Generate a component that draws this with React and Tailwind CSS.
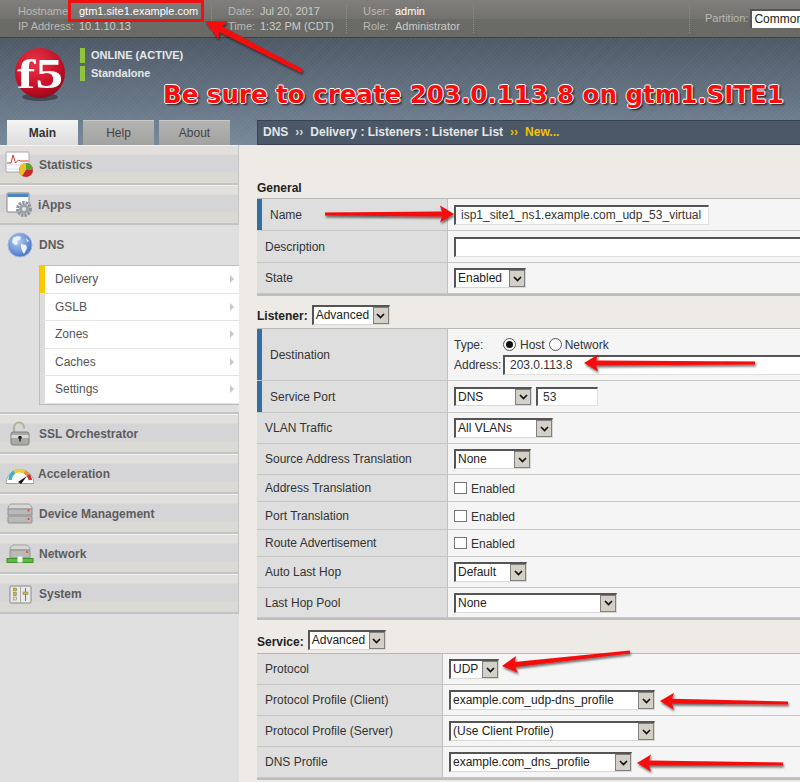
import React from "react";

const arrowPts = (x1, y1, x2, y2, w = 5, hw = 9, hl = 14, back = 2) => {
  const d = Math.hypot(x2 - x1, y2 - y1);
  const ux = (x2 - x1) / d, uy = (y2 - y1) / d;
  const nx = -uy, ny = ux;
  const p = (a, b) => `${(x1 + ux * a + nx * b).toFixed(1)},${(y1 + uy * a + ny * b).toFixed(1)}`;
  return [p(0, -w / 2 + 1), p(d - hl + back, -w / 2), p(d - hl, -hw), p(d, 0), p(d - hl, hw), p(d - hl + back, w / 2), p(0, w / 2 - 1)].join(" ");
};

const ARROWS = [
  [302, 71, 205, 21, 6, 10, 20],
  [325, 214, 454, 214, 5, 8.5, 14],
  [755, 363, 584, 363, 5, 8.5, 14],
  [630, 652, 502, 666, 5, 8.5, 15],
  [788, 703, 660, 701, 5, 8.5, 14],
  [783, 764, 637, 763, 5, 8.5, 14],
];

function Arrows() {
  return (
    <svg className="absolute left-0 top-0 pointer-events-none" width="800" height="782">
      <defs>
        <filter id="arrowShadow" x="-20%" y="-100%" width="140%" height="300%">
          <feDropShadow dx="1" dy="2" stdDeviation="1.2" floodColor="#000" floodOpacity="0.55" />
        </filter>
      </defs>
      {ARROWS.map((a, i) => (
        <polygon key={i} points={arrowPts(a[0], a[1], a[2], a[3], a[4], a[5], a[6])} fill="#f50a0a" filter="url(#arrowShadow)" />
      ))}
    </svg>
  );
}

function Chevron() {
  return (
    <svg width="9" height="6" viewBox="0 0 9 6">
      <path d="M1 1l3.5 3.5L8 1" fill="none" stroke="#111" strokeWidth="1.7" />
    </svg>
  );
}

function Select({ text, className }) {
  return (
    <div className={`flex shrink-0 border-t-2 border-l-2 border-t-[#555] border-l-[#555] border-r border-b border-r-[#d8d8d4] border-b-[#d8d8d4] bg-white ${className}`}>
      <span className="flex-1 overflow-hidden whitespace-nowrap pl-[2px] text-[12px] leading-[16px] text-[#222]">{text}</span>
      <span className="flex w-[16px] items-center justify-center border border-[#7f7f7f] bg-[#d4d0c8]">
        <Chevron />
      </span>
    </div>
  );
}

function TextInput({ value, className }) {
  return (
    <div className={`shrink-0 overflow-hidden whitespace-nowrap border-t-2 border-l-2 border-t-[#555] border-l-[#555] border-r border-b border-r-[#e0e0dc] border-b-[#e0e0dc] bg-white pl-[5px] text-[12px] leading-[16px] text-[#333] ${className}`}>
      {value}
    </div>
  );
}

function Row({ label, h, required, split = "w-[191px]", children }) {
  return (
    <div className={`flex border-b border-b-[#c6c6c4] ${h}`}>
      <div className={`flex shrink-0 items-center border-r border-r-[#c0c0c0] bg-[#dedede] text-[12px] text-[#333] ${split}`}>
        {required ? <span className="h-full w-[5px] shrink-0 bg-[#336ea5]" /> : null}
        <span className="pl-[8px]">{label}</span>
      </div>
      <div className="flex min-w-0 flex-1 items-center gap-[4px] bg-[#f5f5f5] pl-[6px]">{children}</div>
    </div>
  );
}

function Check() {
  return (
    <div className="flex items-center text-[12px] text-[#333]">
      <span className="h-[12px] w-[13px] border border-[#777] bg-white" />
      <span className="ml-[4px] mt-[2px]">Enabled</span>
    </div>
  );
}

function Radio({ on }) {
  return (
    <span className="flex h-[13px] w-[13px] items-center justify-center rounded-full border border-[#555] bg-white">
      {on ? <span className="h-[7px] w-[7px] rounded-full bg-[#111]" /> : null}
    </span>
  );
}

const StatIcon = () => (
  <svg width="30" height="28" viewBox="0 0 30 28">
    <rect x="1" y="1" width="23" height="20" rx="1" fill="#fff" stroke="#aaa" />
    <path d="M1.5 14h22M1.5 18h22" stroke="#cfe0f0" />
    <path d="M2 12h4l2-8 2.5 8 3-3 2 1 8 0" fill="none" stroke="#d33" strokeWidth="1" />
    <circle cx="21" cy="19" r="7" fill="#c9262c" />
    <path d="M21 19V12a7 7 0 0 1 7 7z" fill="#58a62d" />
    <path d="M21 19V12a7 7 0 0 0-7 7 7 7 0 0 0 3 6z" fill="#edc02a" />
  </svg>
);
const AppsIcon = () => (
  <svg width="28" height="26" viewBox="0 0 28 26">
    <rect x="1" y="1" width="22" height="19" rx="1" fill="#fff" stroke="#888" />
    <rect x="1.500" y="1.500" width="21" height="3.500" fill="#4a86c5" />
    <circle cx="18" cy="17" r="6.500" fill="none" stroke="#8d959b" strokeWidth="3" strokeDasharray="2.500 1" />
    <circle cx="18" cy="17" r="5" fill="#9aa2a8" />
    <circle cx="18" cy="17" r="2" fill="#e6e6e6" />
  </svg>
);
const GlobeIcon = () => (
  <svg width="26" height="26" viewBox="0 0 26 26">
    <defs>
      <radialGradient id="globeFill" cx="40%" cy="35%" r="70%">
        <stop offset="0%" stopColor="#b7cff0" />
        <stop offset="100%" stopColor="#3f70c8" />
      </radialGradient>
    </defs>
    <circle cx="13" cy="13" r="12" fill="url(#globeFill)" stroke="#9cb6dc" />
    <path d="M6 6c3-2 6-2 8-1l-1 3-3 1 1 3-3 1-3-3zM14 12l5 1 1 3-3 6-2-3-1-4zM19 6l3 3-2 1z" fill="#eef3fb" />
  </svg>
);
const LockIcon = () => (
  <svg width="22" height="26" viewBox="0 0 22 26">
    <path d="M5 11V6.500a5 5 0 0 1 10 0v1" fill="none" stroke="#b5b39a" strokeWidth="2.200" />
    <rect x="2" y="11" width="18" height="13" rx="2" fill="#a9a9a5" stroke="#808080" />
    <rect x="2.500" y="14" width="17" height="3" fill="#d8d8d4" />
    <circle cx="11" cy="16.500" r="1.800" fill="#222" />
    <rect x="10.300" y="17" width="1.400" height="3.500" fill="#222" />
  </svg>
);
const GaugeIcon = () => (
  <svg width="30" height="22" viewBox="0 0 30 22">
    <path d="M1 20.500a14 14 0 0 1 28 0z" fill="#fff" stroke="#a0a0a0" />
    <path d="M5 17a10.500 10.500 0 0 1 4.500-8" fill="none" stroke="#3cb6c4" strokeWidth="3.500" />
    <path d="M9.500 9a10.500 10.500 0 0 1 10 0" fill="none" stroke="#f0c93a" strokeWidth="3.500" />
    <path d="M19.500 9a10.500 10.500 0 0 1 3.500 3" fill="none" stroke="#ee8a2c" strokeWidth="3.500" />
    <path d="M23 12a10.500 10.500 0 0 1 2.500 5" fill="none" stroke="#d42a2a" strokeWidth="3.500" />
    <path d="M13 19l9-6-6 8z" fill="#111" />
  </svg>
);
const ServerIcon = () => (
  <svg width="26" height="22" viewBox="0 0 26 22">
    <path d="M1 6c0-3 2-5 4-5h16c2 0 4 2 4 5z" fill="#d6d6d4" stroke="#a0a0a0" />
    <rect x="1" y="6" width="24" height="6" fill="#b9b9b7" stroke="#8f8f8f" />
    <rect x="1" y="13" width="24" height="7" rx="1" fill="#b9b9b7" stroke="#8f8f8f" />
    <circle cx="21.500" cy="7.500" r="1" fill="#e33" />
    <circle cx="21.500" cy="16" r="1" fill="#e33" />
  </svg>
);
const NetIcon = () => (
  <svg width="28" height="20" viewBox="0 0 28 20">
    <path d="M4 6c0-3 2-5 4-5h12c2 0 4 2 4 5z" fill="#d6d6d4" stroke="#a0a0a0" />
    <rect x="4" y="6" width="20" height="8" rx="1" fill="#b9b9b7" stroke="#8f8f8f" />
    <circle cx="21" cy="8" r="1" fill="#e33" />
    <rect x="1" y="14.500" width="26" height="4" fill="#5ebd3e" stroke="#3e8f2a" />
    <rect x="11.500" y="12.500" width="5" height="6" fill="#f4f4f4" />
  </svg>
);
const SysIcon = () => (
  <svg width="23" height="19" viewBox="0 0 23 19">
    <rect x="1" y="1" width="21" height="17" rx="1" fill="#e9e9e5" stroke="#8a8a8a" />
    <path d="M11.500 1v17" stroke="#aaa" />
    <rect x="4.500" y="3" width="3" height="3" fill="#d6b52a" stroke="#777" strokeWidth="0.500" />
    <rect x="4.500" y="7.500" width="3" height="3" fill="#d6b52a" stroke="#777" strokeWidth="0.500" />
    <rect x="4.500" y="12" width="3" height="3" fill="#ddd" stroke="#777" strokeWidth="0.500" />
    <path d="M16.500 3v13" stroke="#777" />
    <rect x="14" y="7" width="5" height="2.500" fill="#d6b52a" stroke="#777" strokeWidth="0.500" />
  </svg>
);

function NavItem({ icon, label, gap }) {
  return (
    <div className="flex h-[40px] items-center border-r border-b-2 border-r-[#c4c4c4] border-b-[#c4c4c4] bg-[linear-gradient(#e3dfdc_0,#e3dfdc_9px,#d5d5d7_10px,#d5d5d7_27px,#dbd9d3_28px,#dbd9d3_100%)] pt-[2px] shadow-[inset_0_1px_0_#f2f2f2]">
      <span className="flex w-[39px] shrink-0 items-center justify-center pl-[1px]">{icon}</span>
      <span className={`text-[12px] font-bold text-[#5c5c5c] ${gap}`}>{label}</span>
    </div>
  );
}

function SubItem({ label, active }) {
  return (
    <div className="flex h-[27.500px] items-center border-b border-b-[#e4e4e4] bg-white">
      <span className={`h-full w-[5px] shrink-0 ${active ? "bg-[#fcc900]" : "bg-[#dcdcdc]"}`} />
      <span className="flex-1 pl-[10px] text-[12px] text-[#555]">{label}</span>
      <span className="mr-[5px] h-0 w-0 border-y-[4px] border-l-[4px] border-y-transparent border-l-[#c8c8c8]" />
    </div>
  );
}

function Sidebar() {
  return (
    <div className="h-full w-[239px] shrink-0 bg-[#e0e0e0]">
      <NavItem icon={<StatIcon />} label="Statistics" />
      <NavItem icon={<AppsIcon />} label="iApps" gap="-ml-px" />
      <div className="h-[189px] border-b-2 border-b-[#c4c4c4] bg-[#dfdfdf]">
        <div className="flex h-[40px] items-center">
          <span className="flex w-[39px] shrink-0 items-center justify-center"><GlobeIcon /></span>
          <span className="text-[12px] font-bold text-[#5c5c5c]">DNS</span>
        </div>
        <div className="ml-[39px] border-t border-l border-b border-[#bcbcbc]">
          <SubItem label="Delivery" active />
          <SubItem label="GSLB" />
          <SubItem label="Zones" />
          <SubItem label="Caches" />
          <SubItem label="Settings" />
        </div>
      </div>
      <NavItem icon={<LockIcon />} label="SSL Orchestrator" />
      <NavItem icon={<GaugeIcon />} label="Acceleration" gap="-ml-px" />
      <NavItem icon={<ServerIcon />} label="Device Management" />
      <NavItem icon={<NetIcon />} label="Network" />
      <NavItem icon={<SysIcon />} label="System" />
    </div>
  );
}

function Content() {
  return (
    <div className="min-w-0 flex-1 overflow-hidden bg-[#eeebe7] pl-[18px] pt-[34px]">
      <h2 className="h-[19px] text-[12px] font-bold leading-[18px] text-[#222]">General</h2>
      <div className="border-t border-t-[#b8b8b8]">
        <Row label="Name" h="h-[32px]" required>
          <TextInput value="isp1_site1_ns1.example.com_udp_53_virtual" className="h-[20px] w-[255px]" />
        </Row>
        <Row label="Description" h="h-[32px]">
          <TextInput value="" className="h-[20px] w-[400px]" />
        </Row>
        <div className="border-b-2 border-b-[#bdbdbd]">
          <Row label="State" h="h-[31px]">
            <Select text="Enabled" className="h-[20px] w-[72px]" />
          </Row>
        </div>
      </div>

      <div className="mt-[9px] flex h-[23px] items-start gap-[4px]">
        <span className="pt-[3px] text-[12px] font-bold leading-[16px] text-[#222]">Listener:</span>
        <Select text="Advanced" className="h-[20px] w-[78px]" />
      </div>
      <div className="border-t border-t-[#b8b8b8]">
        <Row label="Destination" h="h-[52px]" required>
          <div className="text-[12px] text-[#333]">
            <div className="flex h-[20px] items-center">
              <span className="w-[49px]">Type:</span>
              <Radio on />
              <span className="ml-[4px]">Host</span>
              <span className="ml-[4px]"><Radio /></span>
              <span className="ml-[3px]">Network</span>
            </div>
            <div className="flex items-center">
              <span className="w-[49px]">Address:</span>
              <TextInput value="203.0.113.8" className="h-[20px] w-[320px]" />
            </div>
          </div>
        </Row>
        <Row label="Service Port" h="h-[32px]" required>
          <Select text="DNS" className="h-[19px] w-[78px]" />
          <TextInput value="53" className="h-[19px] w-[62px]" />
        </Row>
        <Row label="VLAN Traffic" h="h-[31px]">
          <Select text="All VLANs" className="h-[20px] w-[99px]" />
        </Row>
        <Row label="Source Address Translation" h="h-[31px]">
          <Select text="None" className="h-[20px] w-[77px]" />
        </Row>
        <Row label="Address Translation" h="h-[27px]"><Check /></Row>
        <Row label="Port Translation" h="h-[28px]"><Check /></Row>
        <Row label="Route Advertisement" h="h-[27px]"><Check /></Row>
        <Row label="Auto Last Hop" h="h-[31px]">
          <Select text="Default" className="h-[20px] w-[73px]" />
        </Row>
        <div className="border-b-2 border-b-[#bdbdbd]">
          <Row label="Last Hop Pool" h="h-[30px]">
            <Select text="None" className="h-[20px] w-[163px]" />
          </Row>
        </div>
      </div>

      <div className="mt-[10px] flex h-[23px] items-start gap-[4px]">
        <span className="pt-[4px] text-[12px] font-bold leading-[16px] text-[#222]">Service:</span>
        <Select text="Advanced" className="h-[20px] w-[78px]" />
      </div>
      <div className="border-t border-t-[#b8b8b8]">
        <Row label="Protocol" h="h-[31px]" split="w-[186px]">
          <Select text="UDP" className="h-[20px] w-[50px]" />
        </Row>
        <Row label="Protocol Profile (Client)" h="h-[31px]" split="w-[186px]">
          <Select text="example.com_udp-dns_profile" className="h-[20px] w-[206px]" />
        </Row>
        <Row label="Protocol Profile (Server)" h="h-[31px]" split="w-[186px]">
          <Select text="(Use Client Profile)" className="h-[20px] w-[206px]" />
        </Row>
        <div className="border-b-2 border-b-[#bdbdbd]">
          <Row label="DNS Profile" h="h-[31px]" split="w-[186px]">
            <Select text="example.com_dns_profile" className="h-[20px] w-[183px]" />
          </Row>
        </div>
      </div>
    </div>
  );
}

function TopBar() {
  const cell = "border-r border-dotted border-r-[#8f8f8c]";
  const label = "text-[#b9b9b5]";
  const val = "text-[#cbcbc7]";
  return (
    <div className="flex h-[38px] shrink-0 border-b border-b-[#3e4247] bg-[linear-gradient(#807f7d,#73726f_50%,#6a6a67_52%,#696966)] py-[4px] text-[11px] leading-[15px]">
      <div className={`grid w-[212px] grid-cols-[61px_1fr] pl-[18px] ${cell}`}>
        <span className={label}>Hostname:</span>
        <span className="relative text-white">
          gtm1.site1.example.com
          <span className="absolute -top-[4px] left-[-11px] h-[22px] w-[136px] border-[3px] border-[#ee1111]" />
        </span>
        <span className={label}>IP Address:</span>
        <span className={val}>10.1.10.13</span>
      </div>
      <div className={`grid w-[135px] grid-cols-[32px_1fr] pl-[16px] ${cell}`}>
        <span className={label}>Date:</span>
        <span className={val}>Jul 20, 2017</span>
        <span className={label}>Time:</span>
        <span className={val}>1:32 PM (CDT)</span>
      </div>
      <div className={`grid w-[127px] grid-cols-[32px_1fr] pl-[16px] ${cell}`}>
        <span className={label}>User:</span>
        <span className="text-white">admin</span>
        <span className={label}>Role:</span>
        <span className={val}>Administrator</span>
      </div>
      <div className={`w-[216px] ${cell}`} />
      <div className="flex flex-1 items-center overflow-hidden pl-[15px]">
        <span className={label}>Partition:</span>
        <span className="ml-[2px] h-[19px] w-[60px] shrink-0 overflow-hidden whitespace-nowrap border-t-2 border-l-2 border-t-[#555] border-l-[#555] bg-white pl-[2px] text-[12px] leading-[16px] text-[#222]">Common</span>
      </div>
    </div>
  );
}

function Banner() {
  const tabOff = "flex h-[25px] w-[71px] items-center justify-center bg-[linear-gradient(#b4b4b2,#a2a2a0)] text-[12px] text-[#444] shadow-[inset_0_1px_0_#c8c8c6]";
  return (
    <div className="relative flex h-[107px] shrink-0 flex-col justify-between bg-[repeating-linear-gradient(135deg,rgba(255,255,255,0.035)_0_1px,transparent_1px_3px),linear-gradient(#4e5966,#76889a)]">
      <div className="flex pl-[14px] pt-[9px]">
        <svg width="54" height="56" viewBox="0 0 54 56" className="shrink-0">
          <defs>
            <radialGradient id="f5Ball" cx="40%" cy="30%" r="75%">
              <stop offset="0%" stopColor="#e8364a" />
              <stop offset="70%" stopColor="#c40d24" />
              <stop offset="100%" stopColor="#8c0a1c" />
            </radialGradient>
          </defs>
          <ellipse cx="26" cy="50" rx="18" ry="4" fill="#2b2f34" opacity="0.6" />
          <circle cx="26" cy="26" r="25" fill="url(#f5Ball)" />
          <text x="3" y="41" fontFamily="'Liberation Serif', serif" fontWeight="700" fontSize="42" fill="#fff" textLength="46" lengthAdjust="spacingAndGlyphs">f5</text>
        </svg>
        <div className="ml-[12px] mt-[1px] text-[11px] font-bold text-[#e6e8ea]">
          <div className="flex h-[15px] items-center">
            <span className="mr-[6px] h-[15px] w-[5px] bg-[#8fc63d]" />ONLINE (ACTIVE)
          </div>
          <div className="mt-[3px] flex h-[15px] items-center">
            <span className="mr-[6px] h-[15px] w-[5px] bg-[#8fc63d]" />Standalone
          </div>
        </div>
      </div>
      <div className="absolute left-[163px] top-[42px] whitespace-nowrap font-['DejaVu_Sans',sans-serif] text-[24.500px] font-bold leading-[30px] text-[#fb0c0c] [text-shadow:1px_0_0_#fff,-1px_0_0_#fff,0_1px_0_#fff,0_-1px_0_#fff,2px_2px_2px_#222]">
        Be sure to create 203.0.113.8 on gtm1.SITE1
      </div>
      <div className="flex items-end pl-[7px]">
        <div className="flex h-[25px] w-[71px] items-center justify-center bg-[linear-gradient(#f4f4f4,#dcdcdc)] text-[12px] font-bold text-[#333]">Main</div>
        <div className={`ml-[5px] ${tabOff}`}>Help</div>
        <div className={`ml-[5px] ${tabOff}`}>About</div>
        <div className="ml-[27px] flex h-[25px] flex-1 items-center gap-[7px] border-t border-b border-l border-[#39424d] bg-[#4b5867] pb-[2px] pl-[5px] text-[12px] font-bold text-[#e4e6e8]">
          <span>DNS</span>
          <span className="text-[#d8dadc]">››</span>
          <span>Delivery : Listeners : Listener List</span>
          <span className="text-[#eec000]">››</span>
          <span className="text-[#f2c500]">New...</span>
        </div>
      </div>
    </div>
  );
}

export default function App() {
  return (
    <div className="relative flex h-[782px] w-[800px] flex-col overflow-hidden bg-[#eeebe7] font-['Liberation_Sans',Arial,sans-serif]">
      <TopBar />
      <Banner />
      <div className="flex min-h-0 flex-1">
        <Sidebar />
        <Content />
      </div>
      <Arrows />
    </div>
  );
}
